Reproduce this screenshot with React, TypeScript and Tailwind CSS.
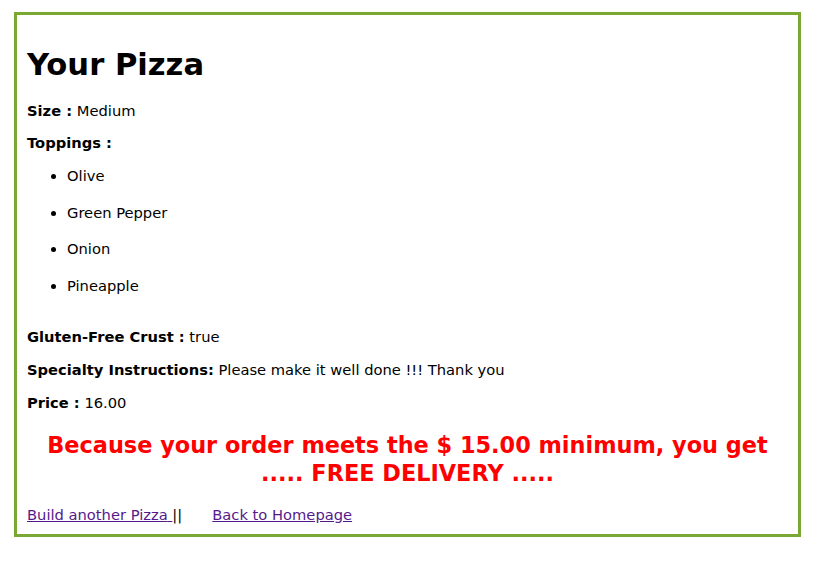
const toppings = ["Olive", "Green Pepper", "Onion", "Pineapple"];

function Field({ label, value, className }: { label: string; value: string; className?: string }) {
    return (
        <div className={`h-[33px] leading-[33px] ${className ?? ""}`}>
            <b className="font-bold">{label}</b> {value}
        </div>
    );
}

export default function App() {
    return (
        <div className="min-h-[580px] bg-white pt-[12px] pl-[14px] text-black">
            <div
                className="w-[787px] border-[3px] border-[#79a933] pl-[10px] pr-[10px] pb-[5px] text-[14.7px]"
                style={{ fontFamily: '"DejaVu Sans", Verdana, sans-serif' }}>
                {/* Heading */}
                <h1 className="mt-[30px] h-[40px] text-[30.6px] font-bold leading-[40px]">Your Pizza</h1>

                <Field label="Size :" value="Medium" className="mt-[9px]" />
                <div className="h-[31px] leading-[31px] font-bold">Toppings :</div>

                <ul className="list-disc pl-[40px]">
                    {toppings.map((t, i) => (
                        <li key={t} className={`${i % 2 === 0 ? "h-[36px] leading-[36px]" : "h-[37px] leading-[37px]"}`}>
                            {t}
                        </li>
                    ))}
                </ul>

                <Field label="Gluten-Free Crust :" value="true" className="mt-[16px]" />
                <Field label="Specialty Instructions:" value="Please make it well done !!! Thank you" />
                <Field label="Price :" value="16.00" />

                {/* Delivery notice */}
                <h2 className="mt-[12px] text-center text-[22.4px] font-bold leading-[28px] text-[#ff0000]">
                    Because your order meets the $ 15.00 minimum, you get
                    <br />
                    ..... FREE DELIVERY .....
                </h2>

                <div className="mt-[14px] h-[28px] leading-[28px]">
                    <a href="#" className="text-[#551a8b] underline">
                        Build another Pizza{" "}
                    </a>
                    ||
                    <a href="#" className="ml-[30px] text-[#551a8b] underline">
                        Back to Homepage
                    </a>
                </div>
            </div>
        </div>
    );
}
